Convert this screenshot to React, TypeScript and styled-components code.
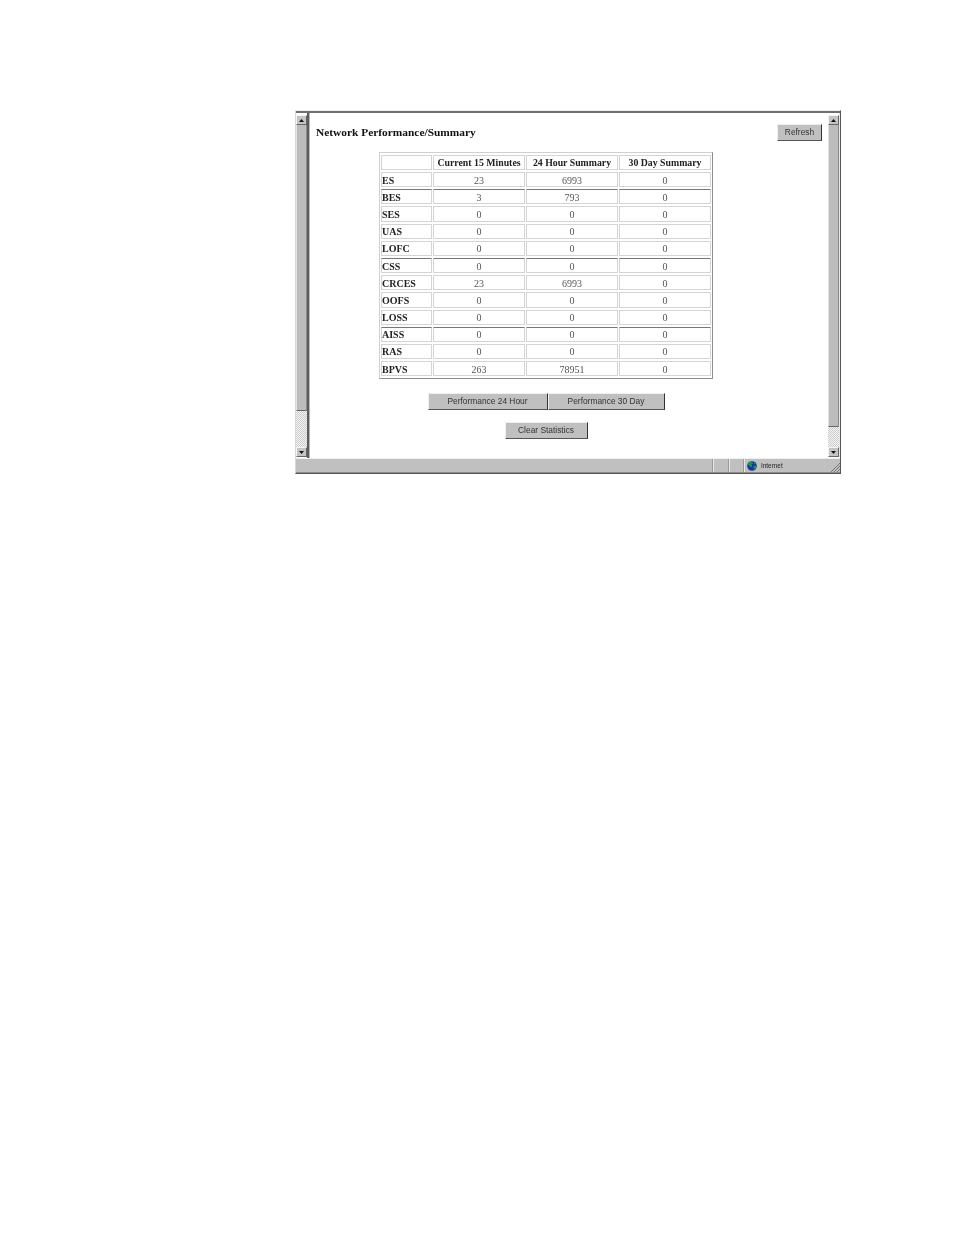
import React, { FC } from 'react'
import styled, { createGlobalStyle } from 'styled-components'

const GlobalStyle = createGlobalStyle`
    html, body {
        margin: 0;
        background: #fff;
    }
`
const Page = styled.div`
    width: 954px;
    height: 1235px;
    padding: 110px 0 0 295px;
    box-sizing: border-box;
    background: #fff;
`
const Window = styled.div`
    width: 546px;
    height: 364px;
    display: flex;
    flex-direction: column;
    box-sizing: border-box;
    border-left: 1px solid #d8d8d8;
    border-right: 1px solid #555;
    border-bottom: 1px solid #555;
    border-top: 1px solid #eee;
    filter: blur(0.25px);
`
const Main = styled.div`
    flex: 1;
    min-height: 0;
    display: flex;
    border-top: 2px solid #707070;
`
const ScrollTrack = styled.div`
    width: 11px;
    flex: none;
    display: flex;
    flex-direction: column;
    padding: 2px 0 1px;
    box-sizing: border-box;
`
const ArrowButton = styled.div`
    height: 10px;
    flex: none;
    display: flex;
    align-items: center;
    justify-content: center;
    background: #c4c4c4;
    border-top: 1px solid #f4f4f4;
    border-left: 1px solid #f4f4f4;
    border-right: 1px solid #666;
    border-bottom: 1px solid #666;
    box-sizing: border-box;
`
const Thumb = styled.div<{ $height: number }>`
    height: ${props => props.$height}px;
    flex: none;
    background: #bcbcbc;
    border-left: 1px solid #e4e4e4;
    border-right: 1px solid #8a8a8a;
    border-bottom: 1px solid #666;
    box-sizing: border-box;
`
const Dither = styled.div`
    flex: 1;
    background: repeating-conic-gradient(#cccccc 0 25%, #f4f4f4 0 50%) 0 0 / 2px 2px;
`
const Content = styled.div`
    flex: 1;
    min-width: 0;
    background: #fff;
    border-left: 2px solid #5c5c5c;
    box-shadow: inset 1px 0 0 #b8b8b8;
    padding: 11px 6px 0 7px;
    display: flex;
    flex-direction: column;
`
const RightEdge = styled.div`
    width: 1px;
    flex: none;
    background: #e8e8e8;
`
const TitleRow = styled.div`
    display: flex;
    justify-content: space-between;
    align-items: center;
    height: 17px;
`
const Title = styled.h1`
    margin: 0 0 2px;
    font: bold 11.4px 'Liberation Serif', serif;
    color: #111;
`
const Center = styled.div`
    width: 334px;
    margin: 11px 0 0 63px;
    display: flex;
    flex-direction: column;
    align-items: center;
`
const StatsTable = styled.table`
    width: 334px;
    table-layout: fixed;
    border-collapse: separate;
    border-spacing: 1px 2px;
    border-top: 1px solid #d0d0d0;
    border-left: 1px solid #d0d0d0;
    border-right: 1px solid #8c8c8c;
    border-bottom: 1px solid #8c8c8c;
    box-sizing: border-box;
`
const HeadCell = styled.th<{ $w?: number }>`
    ${props => (props.$w ? `width: ${props.$w}px;` : '')}
    height: 15px;
    padding: 0;
    border: 1px solid #d4d4d4;
    box-sizing: border-box;
    font: bold 9.8px 'Liberation Serif', serif;
    color: #222;
    text-align: center;
`
const LabelCell = styled.td<{ $dark?: boolean }>`
    height: 15.2px;
    padding: 1px 0 0;
    border: 1px solid #d4d4d4;
    border-top-color: ${props => (props.$dark ? '#777' : '#d4d4d4')};
    box-sizing: border-box;
    font: bold 10px 'Liberation Serif', serif;
    color: #222;
`
const ValueCell = styled.td<{ $dark?: boolean }>`
    height: 15.2px;
    padding: 1px 0 0;
    border: 1px solid #d4d4d4;
    border-top-color: ${props => (props.$dark ? '#777' : '#d4d4d4')};
    box-sizing: border-box;
    font: 10px 'Liberation Serif', serif;
    color: #555;
    text-align: center;
`
const ButtonRow = styled.div`
    display: flex;
    justify-content: center;
    margin-top: 14px;
`
const ClearRow = styled(ButtonRow)`
    margin-top: 12px;
`
const Btn = styled.button<{ $w: number }>`
    width: ${props => props.$w}px;
    height: 17px;
    padding: 0 0 2px;
    background: #c0c0c0;
    border-top: 1px solid #f0f0f0;
    border-left: 1px solid #f0f0f0;
    border-right: 1px solid #333;
    border-bottom: 1px solid #555;
    box-sizing: border-box;
    font: 8.4px 'Liberation Sans', sans-serif;
    color: #333;
`
const StatusBar = styled.div`
    height: 15px;
    flex: none;
    display: flex;
    align-items: stretch;
    background: #c0c0c0;
    border-top: 1px solid #eee;
    border-bottom: 1px solid #8c8c8c;
    box-sizing: border-box;
`
const StatusPane = styled.div<{ $w?: number }>`
    ${props => (props.$w ? `width: ${props.$w}px; flex: none;` : 'flex: 1;')}
    box-sizing: border-box;
    border-right: 1px solid #e8e8e8;
    box-shadow: inset -1px 0 0 #999;
`
const ZonePane = styled.div`
    flex: 1;
    display: flex;
    align-items: center;
    gap: 4px;
    padding-left: 2px;
    font: 6.4px 'Liberation Sans', sans-serif;
    color: #222;
`
const Grip = styled.svg`
    margin-left: auto;
    align-self: flex-end;
    flex: none;
`

const columns = ['Current 15 Minutes', '24 Hour Summary', '30 Day Summary']

const rows = [
    { name: 'ES', values: ['23', '6993', '0'] },
    { name: 'BES', values: ['3', '793', '0'], dark: true },
    { name: 'SES', values: ['0', '0', '0'] },
    { name: 'UAS', values: ['0', '0', '0'] },
    { name: 'LOFC', values: ['0', '0', '0'] },
    { name: 'CSS', values: ['0', '0', '0'], dark: true },
    { name: 'CRCES', values: ['23', '6993', '0'] },
    { name: 'OOFS', values: ['0', '0', '0'] },
    { name: 'LOSS', values: ['0', '0', '0'] },
    { name: 'AISS', values: ['0', '0', '0'], dark: true },
    { name: 'RAS', values: ['0', '0', '0'] },
    { name: 'BPVS', values: ['263', '78951', '0'] },
]

const Arrow: FC<{ down?: boolean }> = ({ down }) => (
    <svg width="5" height="3" viewBox="0 0 5 3">
        <path d={down ? 'M0 0h5L2.5 3z' : 'M0 3h5L2.5 0z'} fill="#111" />
    </svg>
)

const Scrollbar: FC<{ thumb: number }> = ({ thumb }) => (
    <ScrollTrack>
        <ArrowButton>
            <Arrow />
        </ArrowButton>
        <Thumb $height={thumb} />
        <Dither />
        <ArrowButton>
            <Arrow down />
        </ArrowButton>
    </ScrollTrack>
)

const Globe: FC = () => (
    <svg width="10" height="10" viewBox="0 0 10 10">
        <circle cx="5" cy="5" r="4.8" fill="#1438a8" />
        <path d="M2 1.5l3-.8 1 1.6-1.4 1.4.6 1.6-1.6.9L2 4.2 1 3.4zM6.6 5l2.6-.6.2 2-1.8 2.4-1-1.4z" fill="#1f9a3a" />
        <path d="M7 1.4l1.2 1-.8.8z" fill="#38c060" />
    </svg>
)

const App: FC = () => (
    <Page>
        <GlobalStyle />
        <Window>
            <Main>
                <Scrollbar thumb={286} />
                <Content>
                    <TitleRow>
                        <Title>Network Performance/Summary</Title>
                        <Btn $w={45}>Refresh</Btn>
                    </TitleRow>
                    <Center>
                        <StatsTable>
                            <thead>
                                <tr>
                                    <HeadCell $w={51} />
                                    {columns.map(c => (
                                        <HeadCell key={c}>{c}</HeadCell>
                                    ))}
                                </tr>
                            </thead>
                            <tbody>
                                {rows.map(r => (
                                    <tr key={r.name}>
                                        <LabelCell $dark={r.dark}>{r.name}</LabelCell>
                                        {r.values.map((v, i) => (
                                            <ValueCell key={i} $dark={r.dark}>
                                                {v}
                                            </ValueCell>
                                        ))}
                                    </tr>
                                ))}
                            </tbody>
                        </StatsTable>
                        <ButtonRow>
                            <Btn $w={120}>Performance 24 Hour</Btn>
                            <Btn $w={117}>Performance 30 Day</Btn>
                        </ButtonRow>
                        <ClearRow>
                            <Btn $w={83}>Clear Statistics</Btn>
                        </ClearRow>
                    </Center>
                </Content>
                <Scrollbar thumb={302} />
                <RightEdge />
            </Main>
            <StatusBar>
                <StatusPane $w={418} />
                <StatusPane $w={16} />
                <StatusPane $w={15} />
                <ZonePane>
                    <Globe />
                    <span>Internet</span>
                    <Grip width="10" height="10" viewBox="0 0 10 10">
                        <path d="M1 10L10 1M4 10l6-6M7 10l3-3" stroke="#777" strokeWidth="1" />
                    </Grip>
                </ZonePane>
            </StatusBar>
        </Window>
    </Page>
)

export default App
